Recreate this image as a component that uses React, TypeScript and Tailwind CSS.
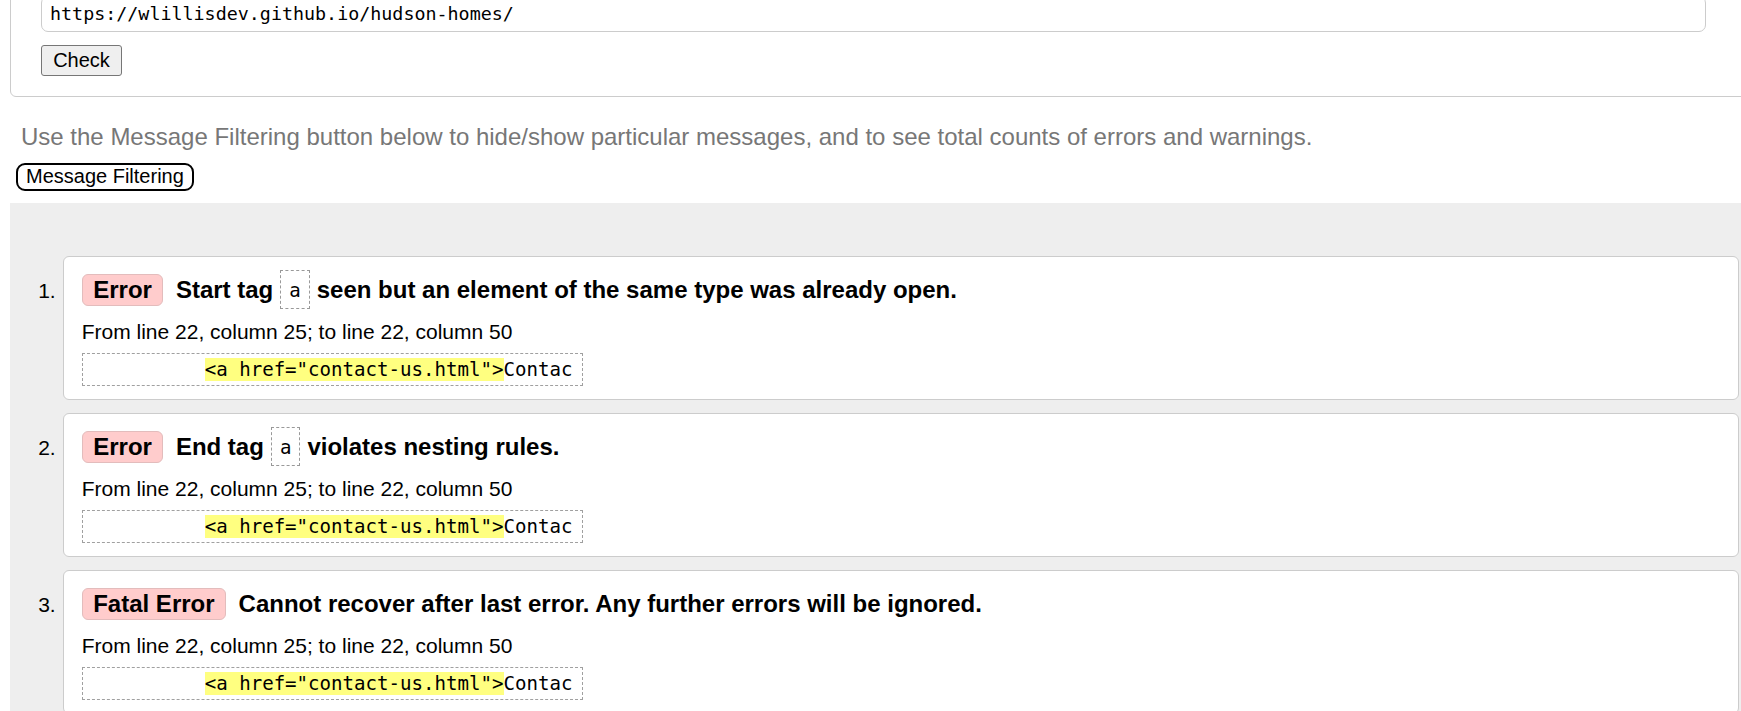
import React from "react";

type Item = { n: string; badge: string; pre?: string; post?: string; text?: string };

const items: Item[] = [
  { n: "1.", badge: "Error", pre: "Start tag", post: "seen but an element of the same type was already open." },
  { n: "2.", badge: "Error", pre: "End tag", post: "violates nesting rules." },
  { n: "3.", badge: "Fatal Error", text: "Cannot recover after last error. Any further errors will be ignored." },
];

function Card({ item }: { item: Item }) {
  return (
    <div className="flex">
      <div className="w-[52.7px] shrink-0 pr-[7px] pt-[23px] text-right text-[21px] leading-[24px] text-black">
        {item.n}
      </div>
      <div className="h-[144px] w-[1676px] shrink-0 rounded-[6px] border border-[#cccccc] bg-white pl-[18px] pt-[13px]">
        <div className="flex h-[39px] items-center text-[24px] leading-[28px] font-bold text-black">
          <span className="flex h-[32px] items-center rounded-[6px] border border-[#e3bcbc] bg-[#ffcccc] px-[10.5px]">
            {item.badge}
          </span>
          {item.text ? (
            <span className="ml-[12.5px] whitespace-nowrap">{item.text}</span>
          ) : (
            <>
              <span className="ml-[12.5px] whitespace-nowrap">{item.pre}</span>
              <span className="ml-[7px] flex h-[39px] items-center border border-dashed border-[#999999] px-[8px] pt-[3px] font-['DejaVu_Sans_Mono',monospace] text-[19.1px] font-normal">
                a
              </span>
              <span className="ml-[7px] whitespace-nowrap">{item.post}</span>
            </>
          )}
        </div>
        <div className="mt-[11px] text-[21px] leading-[24px] text-black">
          From line 22, column 25; to line 22, column 50
        </div>
        <div className="mt-[9px] inline-block h-[33px] border border-dashed border-[#a0a0a0] py-[4px] pl-[7px] pr-[9px] font-['DejaVu_Sans_Mono',monospace] text-[19.1px] leading-[23px] whitespace-pre text-black">
          {"          "}
          <span className="bg-[#ffff80]">{'<a href="contact-us.html">'}</span>
          Contac
        </div>
      </div>
    </div>
  );
}

export default function App() {
  return (
    <div className="h-[711px] w-[1741px] overflow-hidden bg-white pl-[10px] font-['Liberation_Sans',Arial,sans-serif] text-black">
      <div className="-mt-[20px] w-[1760px] rounded-bl-[6px] border border-[#cccccc] pb-[20px] pl-[30px] pt-[15px]">
        <div className="flex h-[36px] w-[1665px] items-center rounded-[7px] border border-[#cccccc] bg-white pl-[8px] font-['DejaVu_Sans_Mono',monospace] text-[18.35px] leading-[22px] text-black">
          https://wlillisdev.github.io/hudson-homes/
        </div>
        <button className="mt-[13px] flex h-[31px] w-[81px] items-center justify-center rounded-[3px] border border-[#767676] bg-[#efefef] text-[20px] leading-[23px] text-black">
          Check
        </button>
      </div>
      <p className="ml-[11px] mt-[26px] whitespace-nowrap text-[24px] leading-[27.5px] text-[#777777]">
        Use the Message Filtering button below to hide/show particular messages, and to see total counts of errors and warnings.
      </p>
      <button className="ml-[6px] mt-[12px] flex h-[28px] w-[178px] items-center rounded-[9px] border-2 border-black bg-white px-[8px] text-[20px] leading-[23px] text-black">
        Message Filtering
      </button>
      <div className="mt-[12.5px] flex w-[1760px] flex-col gap-[13px] bg-[#eeeeee] pt-[53px] pb-[20px]">
        {items.map((it) => (
          <Card key={it.n} item={it} />
        ))}
      </div>
    </div>
  );
}
